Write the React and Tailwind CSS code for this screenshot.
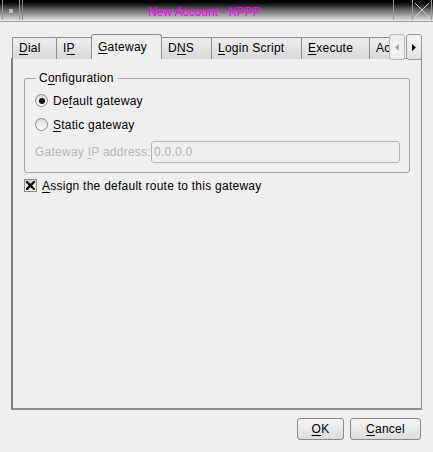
import React from "react";

const U = ({ children }) => <span className="underline underline-offset-[2px] decoration-1">{children}</span>;

function Tab({ w, children, selected, first }) {
  if (selected) {
    return (
      <div
        className={`relative z-10 -ml-px h-[25px] shrink-0 border border-b-0 border-[#8c8c8c] bg-[#efefef] rounded-t-[3px] flex items-center px-[6px] pb-[1px] text-black`}
        style={{ width: w }}
      >
        {children}
      </div>
    );
  }
  return (
    <div
      className={`${first ? "" : "-ml-px"} h-[22px] shrink-0 border border-b-0 border-[#8c8c8c] bg-gradient-to-b from-[#eeeeee] to-[#d9d9d9] rounded-t-[2px] flex items-center px-[6px] pb-[1px] overflow-hidden whitespace-nowrap`}
      style={{ width: w }}
    >
      {children}
    </div>
  );
}

function Radio({ checked }) {
  return (
    <div className="w-[13px] h-[13px] rounded-full border border-[#8a8a8a] bg-gradient-to-b from-[#d8d8d8] to-[#ffffff] flex items-center justify-center shrink-0">
      {checked && <div className="w-[6px] h-[6px] rounded-full bg-[#111]" />}
    </div>
  );
}

export default function App() {
  return (
    <div
      className="w-[433px] h-[452px] bg-[#efefef] overflow-hidden text-[12px] leading-[14px] tracking-[0.25px] text-black"
      style={{ fontFamily: '"Liberation Sans", Arial, sans-serif' }}
    >
      {/* Title bar */}
      <div className="h-[22px] flex flex-col tracking-normal">
        <div className="h-[20px] flex bg-gradient-to-b from-[#000000] via-[#686868] to-[#dcdcdc]">
          <div className="w-[24px] flex">
            <div className="ml-[2px] w-[18px] border-l border-r border-[#9a9a9a] flex items-center justify-center">
              <div className="w-[4px] h-[4px] bg-[#b8b8b8] mt-[1px]" />
            </div>
            <div className="ml-[2px] w-px bg-[#8a8a8a]" />
          </div>
          <div className="flex-1 flex items-center justify-center text-[#ff00ff] text-[12px] pt-[4px] pr-[8px]">
            New Account - KPPP
          </div>
          <div className="flex">
            <div className="w-[20px] border-l border-r border-[#9a9a9a] flex items-end justify-center pb-[3px]">
              <div className="w-[14px] h-px bg-[#b8b8b8]" />
            </div>
            <div className="w-[19px] border-r border-[#9a9a9a] flex items-center justify-center">
              <svg width="16" height="16" viewBox="0 0 16 16">
                <path d="M1 1 L15 15 M15 1 L1 15" stroke="#cccccc" strokeWidth="1" fill="none" />
              </svg>
            </div>
            <div className="w-[1px]" />
          </div>
        </div>
        <div className="h-px bg-[#e6e6e6]" />
        <div className="h-px bg-[#a0a0a0]" />
      </div>

      <div className="px-[11px] pt-[12px]">
        {/* Tab row */}
        <div className="flex h-[25px] pl-[1px]">
          <div className="flex items-end w-[378px] overflow-hidden">
            <Tab w={45} first><U>D</U>ial</Tab>
            <Tab w={36}>I<U>P</U></Tab>
            <Tab w={71} selected><U>G</U>ateway</Tab>
            <Tab w={51}>D<U>N</U>S</Tab>
            <Tab w={91}><U>L</U>ogin Script</Tab>
            <Tab w={69}><U>E</U>xecute</Tab>
            <Tab w={40}>Accounting</Tab>
          </div>
          <div className="relative z-10 flex gap-[1px] h-[26px]">
            <div className="w-[16px] h-[26px] border border-[#b8b8b8] rounded-[3px] bg-[#efefef] flex items-center justify-center">
              <svg width="4" height="7" viewBox="0 0 4 7"><path d="M4 0 L0 3.5 L4 7 Z" fill="#a8a8a8" /></svg>
            </div>
            <div className="w-[16px] h-[26px] border border-[#9a9a9a] rounded-[3px] bg-gradient-to-b from-[#f4f4f4] to-[#e2e2e2] flex items-center justify-center">
              <svg width="4" height="7" viewBox="0 0 4 7"><path d="M0 0 L4 3.5 L0 7 Z" fill="#000" /></svg>
            </div>
          </div>
        </div>

        {/* Panel */}
        <div className="-mt-px h-[352px] w-[411px] border-t border-l-2 border-r border-b-2 border-t-[#8c8c8c] border-l-[#7e7e7e] border-r-[#8c8c8c] border-b-[#8e8e8e] px-[11px] pt-[12px]">
          <fieldset className="border border-[#a4a4a4] rounded-[3px] pl-[10px] pr-[9px] pb-[9px] pt-0 m-0">
            <legend className="ml-[0px] px-[4px] leading-[14px]">
              C<U>o</U>nfiguration
            </legend>
            <div className="mt-[9px] flex items-center h-[13px]">
              <Radio checked />
              <span className="ml-[5px]">De<U>f</U>ault gateway</span>
            </div>
            <div className="mt-[11px] flex items-center h-[13px]">
              <Radio />
              <span className="ml-[5px]"><U>S</U>tatic gateway</span>
            </div>
            <div className="mt-[10px] flex items-center h-[22px]">
              <span className="w-[116px] text-[#b6b6b6] whitespace-nowrap">
                Gateway <U>I</U>P address:
              </span>
              <div className="flex-1 h-[22px] border border-[#b4b4b4] rounded-[3px] bg-[#efefef] flex items-center pl-[2px] text-[#b2b2b2]">
                0.0.0.0
              </div>
            </div>
          </fieldset>

          <div className="mt-[6px] flex items-center h-[13px]">
            <div className="w-[13px] h-[13px] border border-[#8a8a8a] bg-gradient-to-b from-[#d8d8d8] to-[#ffffff] flex items-center justify-center shrink-0">
              <svg width="9" height="9" viewBox="0 0 9 9">
                <path d="M1 1 L8 8 M8 1 L1 8" stroke="#111" strokeWidth="2.4" strokeLinecap="square" fill="none" />
              </svg>
            </div>
            <span className="ml-[5px]"><U>A</U>ssign the default route to this gateway</span>
          </div>
        </div>

        {/* Buttons */}
        <div className="mt-[8px] flex justify-end gap-[6px] pr-px">
          <button className="w-[47px] h-[22px] border border-[#8a8a8a] rounded-[3px] bg-gradient-to-b from-[#f6f6f6] to-[#dcdcdc] flex items-center justify-center">
            <U>O</U>K
          </button>
          <button className="w-[71px] h-[22px] border border-[#8a8a8a] rounded-[3px] bg-gradient-to-b from-[#f6f6f6] to-[#dcdcdc] flex items-center justify-center">
            <U>C</U>ancel
          </button>
        </div>
      </div>
    </div>
  );
}
